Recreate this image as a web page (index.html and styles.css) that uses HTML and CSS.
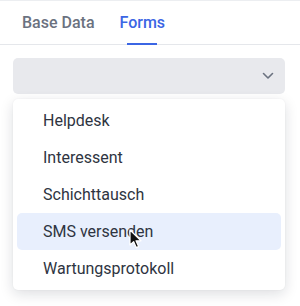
FILE: index.html
```html
<!DOCTYPE html>
<html>
<head>
<meta charset="utf-8">
<link rel="stylesheet" href="styles.css">
</head>
<body>
<div class="page">
  <div class="tabs">
    <div class="tab">Base Data</div>
    <div class="tab active">Forms</div>
  </div>
  <div class="content">
    <div class="select">
      <svg class="chev" width="12" height="8" viewBox="0 0 12 8"><path d="M1.5 1.5 L6 6 L10.5 1.5" fill="none" stroke="#6b7280" stroke-width="1.6" stroke-linecap="round" stroke-linejoin="round"/></svg>
    </div>
    <div class="menu">
      <div class="item">Helpdesk</div>
      <div class="item">Interessent</div>
      <div class="item">Schichttausch</div>
      <div class="item hover">SMS versenden</div>
      <div class="item">Wartungsprotokoll</div>
    </div>
  </div>
  <svg class="cursor" width="14" height="21" viewBox="0 0 14 21"><path d="M1 1 L1 16 L4.6 12.6 L7.2 18.6 L9.6 17.6 L7 11.8 L12 11.8 Z" fill="#111" stroke="#fff" stroke-width="1.2" stroke-linejoin="round"/></svg>
</div>
</body>
</html>
```
FILE: styles.css
```css
html, body {
  margin: 0;
  padding: 0;
  background: #fff;
}
body {
  font-family: Roboto, "Liberation Sans", sans-serif;
  width: 300px;
  height: 306px;
  overflow: hidden;
}
.page {
  position: relative;
  border-top: 1px solid #eceef1;
  height: 305px;
}
.tabs {
  display: flex;
  height: 43px;
  padding-left: 10px;
  border-bottom: 1px solid #e5e7eb;
}
.tab {
  position: relative;
  padding: 0 12px;
  font-size: 16px;
  line-height: 43px;
  font-weight: 500;
  color: #6b7280;
}
.tab.active {
  color: #3b66e4;
  margin-left: 1px;
}
.tab.active::after {
  content: "";
  position: absolute;
  left: 50%;
  bottom: -1px;
  width: 30px;
  margin-left: -15px;
  height: 2px;
  background: #3b66e4;
}
.content {
  padding: 13px 15px 0 13px;
}
.select {
  height: 36px;
  background: #e8e9ed;
  border-radius: 5px;
  display: flex;
  align-items: center;
  justify-content: flex-end;
  padding-right: 11px;
}
.chev {
  display: block;
}
.menu {
  margin-top: 5px;
  background: #fff;
  border-radius: 5px;
  box-shadow: 0 4px 14px rgba(17, 24, 39, 0.14), 0 0 2px rgba(17, 24, 39, 0.06);
  padding: 3px 4px;
}
.item {
  height: 37px;
  line-height: 37px;
  padding-left: 26px;
  font-size: 16px;
  color: #2e3441;
  border-radius: 5px;
}
.item.hover {
  background: #e8effd;
}
.cursor {
  position: absolute;
  left: 129px;
  top: 228px;
}
```
